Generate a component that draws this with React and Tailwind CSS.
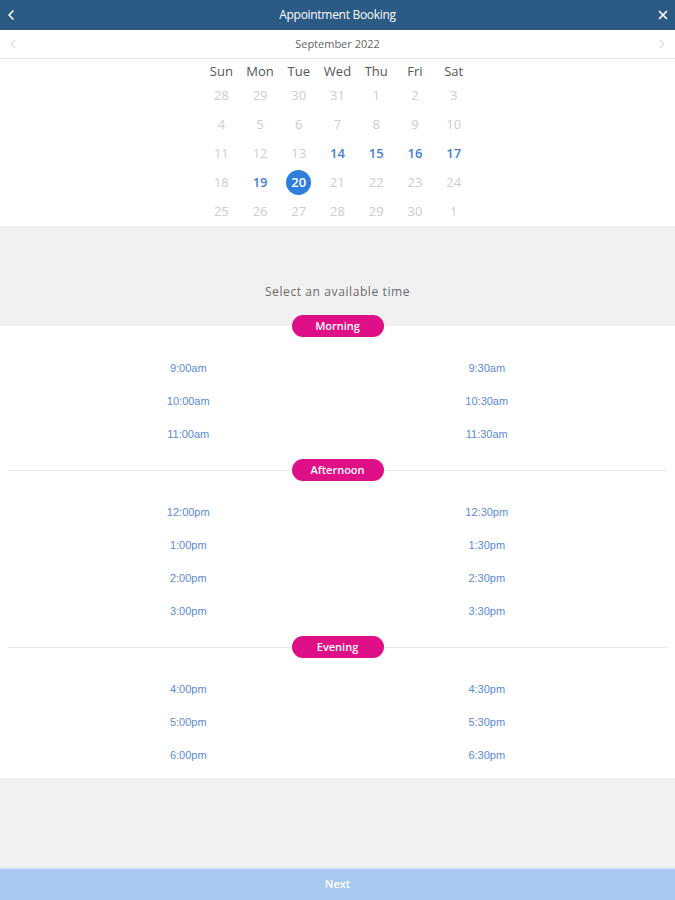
import { ChevronLeft, ChevronRight, X } from 'lucide-react'

const WEEKDAYS = ['Sun', 'Mon', 'Tue', 'Wed', 'Thu', 'Fri', 'Sat']

const WEEKS = [
  [28, 29, 30, 31, 1, 2, 3],
  [4, 5, 6, 7, 8, 9, 10],
  [11, 12, 13, 14, 15, 16, 17],
  [18, 19, 20, 21, 22, 23, 24],
  [25, 26, 27, 28, 29, 30, 1],
]

const AVAILABLE = [14, 15, 16, 17, 19]
const SELECTED = 20

const SLOTS = [
  { name: 'Morning', times: [['9:00am', '9:30am'], ['10:00am', '10:30am'], ['11:00am', '11:30am']] },
  { name: 'Afternoon', times: [['12:00pm', '12:30pm'], ['1:00pm', '1:30pm'], ['2:00pm', '2:30pm'], ['3:00pm', '3:30pm']] },
  { name: 'Evening', times: [['4:00pm', '4:30pm'], ['5:00pm', '5:30pm'], ['6:00pm', '6:30pm']] },
]

function DayCell({ day, rowIndex }) {
  const inMonth = !(rowIndex === 0 && day > 20) && !(rowIndex === 4 && day < 10)
  if (inMonth && day === SELECTED) {
    return (
      <div className="flex items-center justify-center h-[29px]">
        <span className="w-[25px] h-[25px] rounded-full bg-[#2f7edb] text-white font-semibold flex items-center justify-center">
          {day}
        </span>
      </div>
    )
  }
  const available = inMonth && AVAILABLE.includes(day)
  return (
    <div className={`flex items-center justify-center h-[29px] ${available ? 'text-[#4a80d4] font-semibold' : 'text-[#cdcdcd]'}`}>
      {day}
    </div>
  )
}

function Pill({ name }) {
  return (
    <span className="w-[92px] h-[22px] rounded-full bg-[#df0f87] text-white text-[11px] font-semibold flex items-center justify-center">
      {name}
    </span>
  )
}

export default function App() {
  return (
    <div className="min-h-screen flex flex-col bg-[#f1f1f1] font-['Open_Sans',sans-serif]">
      {/* Header */}
      <div className="h-[30px] bg-[#2b5a85] flex items-center justify-between px-[3px] text-white">
        <ChevronLeft size={16} strokeWidth={2.5} />
        <span className="text-[12px] tracking-tight">Appointment Booking</span>
        <X size={14} strokeWidth={3} className="mr-[2px]" />
      </div>

      {/* Month nav */}
      <div className="h-[29px] bg-white border-b border-[#e8e8e8] flex items-center justify-between px-[6px]">
        <ChevronLeft size={14} className="text-[#dddddd]" />
        <span className="text-[11px] text-[#666666]">September 2022</span>
        <ChevronRight size={14} className="text-[#dddddd]" />
      </div>

      {/* Calendar */}
      <div className="bg-white">
        <div className="w-[271px] mx-auto grid grid-cols-7 text-[13px]">
          {WEEKDAYS.map(d => (
            <div key={d} className="h-[22px] flex items-end justify-center text-[#555555]">{d}</div>
          ))}
          {WEEKS.map((week, r) =>
            week.map((day, c) => <DayCell key={`${r}-${c}`} day={day} rowIndex={r} />)
          )}
        </div>
      </div>

      {/* Prompt */}
      <div className="h-[100px] flex items-end justify-center pb-[25px]">
        <span className="text-[12px] text-[#6b6b6b] tracking-wider">Select an available time</span>
      </div>

      {/* Time slots */}
      <div className="bg-white flex flex-col">
        {SLOTS.map((slot, i) => (
          <div key={slot.name} className="flex flex-col">
            <div className="relative h-[22px] flex items-center justify-center -mt-[11px]">
              {i > 0 && <div className="absolute left-[8px] right-[8px] top-1/2 h-px bg-[#e6e6e6]" />}
              <div className="relative">
                <Pill name={slot.name} />
              </div>
            </div>
            <div className={`pt-[15px] ${i === SLOTS.length - 1 ? 'pb-[6px]' : 'pb-[19px]'} px-[39px] grid grid-cols-2 font-['Liberation_Sans',sans-serif] text-[11px] text-[#5b8ad6]`}>
              {slot.times.map(([a, b]) => (
                <div key={a} className="contents">
                  <div className="h-[33px] flex items-center justify-center">{a}</div>
                  <div className="h-[33px] flex items-center justify-center">{b}</div>
                </div>
              ))}
            </div>
          </div>
        ))}
      </div>

      <div className="flex-1" />

      {/* Next */}
      <div className="h-[33px] bg-[#a7c8ef] border-t-2 border-[#dbe8f7] flex items-center justify-center">
        <span className="text-[11px] font-semibold text-white">Next</span>
      </div>
    </div>
  )
}
